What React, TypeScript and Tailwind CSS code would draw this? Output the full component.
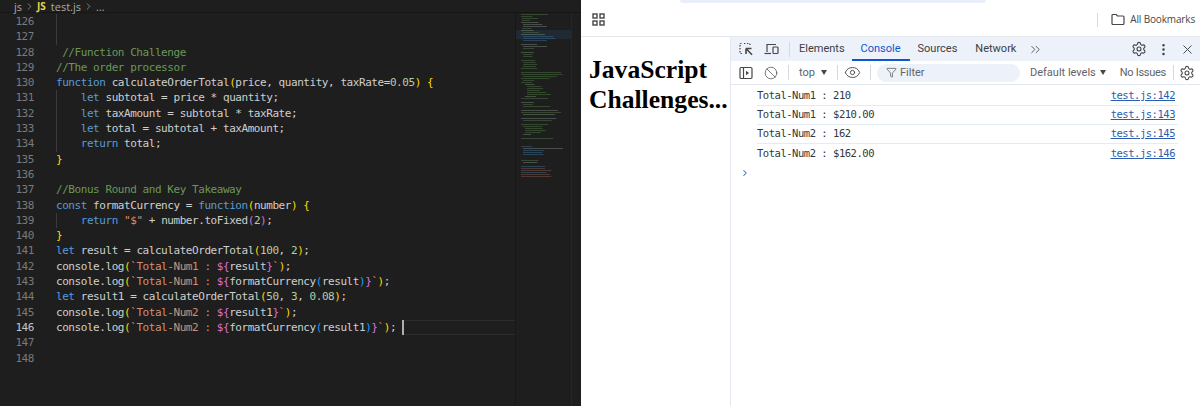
import React from "react";
import { Settings, MoreVertical, X, ChevronsRight, Eye, Ban, Filter, ChevronRight } from "lucide-react";

const C: Record<string, string> = {
  k: "text-[#569cd6]",
  t: "text-[#cfcfcf]",
  c: "text-[#6a9955]",
  s: "text-[#ce9178]",
  n: "text-[#b5cea8]",
  y: "text-[#ffd700]",
  p: "text-[#da70d6]",
  b: "text-[#179fff]",
};

type Tok = [string, string];
const code: { n: number; g?: boolean; toks: Tok[] }[] = [
  { n: 126, g: true, toks: [] },
  { n: 127, g: true, toks: [] },
  { n: 128, toks: [[" //Function Challenge", "c"]] },
  { n: 129, toks: [["//The order processor", "c"]] },
  { n: 130, toks: [["function", "k"], [" calculateOrderTotal", "t"], ["(", "y"], ["price, quantity, taxRate", "t"], ["=", "t"], ["0.05", "n"], [")", "y"], [" ", "t"], ["{", "y"]] },
  { n: 131, g: true, toks: [["    ", "t"], ["let", "k"], [" subtotal = price * quantity;", "t"]] },
  { n: 132, g: true, toks: [["    ", "t"], ["let", "k"], [" taxAmount = subtotal * taxRate;", "t"]] },
  { n: 133, g: true, toks: [["    ", "t"], ["let", "k"], [" total = subtotal + taxAmount;", "t"]] },
  { n: 134, g: true, toks: [["    ", "t"], ["return", "k"], [" total;", "t"]] },
  { n: 135, toks: [["}", "y"]] },
  { n: 136, toks: [] },
  { n: 137, toks: [["//Bonus Round and Key Takeaway", "c"]] },
  { n: 138, toks: [["const", "k"], [" formatCurrency = ", "t"], ["function", "k"], ["(", "y"], ["number", "t"], [")", "y"], [" ", "t"], ["{", "y"]] },
  { n: 139, g: true, toks: [["    ", "t"], ["return", "k"], [" ", "t"], ['"$"', "s"], [" + number.toFixed", "t"], ["(", "p"], ["2", "n"], [")", "p"], [";", "t"]] },
  { n: 140, toks: [["}", "y"]] },
  { n: 141, toks: [["let", "k"], [" result = calculateOrderTotal", "t"], ["(", "y"], ["100", "n"], [", ", "t"], ["2", "n"], [")", "y"], [";", "t"]] },
  { n: 142, toks: [["console.log", "t"], ["(", "y"], ["`Total-Num1 : ", "s"], ["${", "p"], ["result", "t"], ["}", "p"], ["`", "s"], [")", "y"], [";", "t"]] },
  { n: 143, toks: [["console.log", "t"], ["(", "y"], ["`Total-Num1 : ", "s"], ["${", "p"], ["formatCurrency", "t"], ["(", "b"], ["result", "t"], [")", "b"], ["}", "p"], ["`", "s"], [")", "y"], [";", "t"]] },
  { n: 144, toks: [["let", "k"], [" result1 = calculateOrderTotal", "t"], ["(", "y"], ["50", "n"], [", ", "t"], ["3", "n"], [", ", "t"], ["0.08", "n"], [")", "y"], [";", "t"]] },
  { n: 145, toks: [["console.log", "t"], ["(", "y"], ["`Total-Num2 : ", "s"], ["${", "p"], ["result1", "t"], ["}", "p"], ["`", "s"], [")", "y"], [";", "t"]] },
  { n: 146, toks: [["console.log", "t"], ["(", "y"], ["`Total-Num2 : ", "s"], ["${", "p"], ["formatCurrency", "t"], ["(", "b"], ["result1", "t"], [")", "b"], ["}", "p"], ["`", "s"], [")", "y"], [";", "t"]] },
  { n: 147, toks: [] },
  { n: 148, toks: [] },
];

// minimap rows: indent, width, colour
const G = "#4f7a45", W = "#7d8a80", B = "#3f6f9c", R = "#8a5a48";
const mini: [number, number, string][] = [
  [0, 34, G], [0, 14, G], [1, 20, G], [1, 10, G], [0, 22, W], [2, 24, W], [2, 30, W], [1, 12, G], [0, 16, W], [2, 20, G], [0, 30, W], [2, 38, B], [2, 40, B], [2, 30, B], [0, 0, W], [0, 20, W], [2, 30, W], [2, 14, G], [0, 0, W],
  [0, 16, W], [2, 12, G], [2, 12, G], [0, 0, W], [0, 18, G], [2, 16, G], [2, 18, G], [2, 16, G], [0, 20, G], [0, 0, W], [0, 50, G], [0, 52, G], [2, 42, G], [0, 36, G], [2, 14, G], [0, 14, G], [4, 12, W], [6, 18, G], [6, 20, G], [6, 16, G], [6, 24, G], [6, 30, G], [4, 14, W], [0, 34, G], [0, 0, W],
  [0, 16, W], [2, 12, G], [2, 34, G], [0, 0, W], [0, 46, W], [0, 50, G], [2, 40, W], [0, 0, W], [0, 44, W], [2, 36, G], [0, 0, W], [0, 34, G], [2, 24, G], [4, 22, G], [4, 26, G], [4, 20, G], [2, 10, W], [0, 0, W], [0, 40, G], [0, 0, W], [0, 0, W], [0, 0, W], [0, 14, B], [2, 50, W], [2, 26, B], [2, 24, B], [2, 26, B], [0, 0, W], [0, 0, W], [0, 22, G], [2, 18, W], [0, 0, W], [0, 30, B], [0, 30, R], [0, 38, R], [0, 32, B], [0, 36, R], [0, 38, R],
];

function Minimap() {
  return (
    <svg width="55" height="180" viewBox="0 0 55 180" className="block">
      <rect x="0" y="17" width="55" height="9" fill="#1f2a33" />
      {mini.map((m, i) =>
        m[1] ? <rect key={i} x={5 + m[0]} y={1 + i * 2} width={m[1] * 0.8} height="1" fill={m[2]} opacity="0.45" /> : null
      )}
    </svg>
  );
}

function Inspect() {
  return (
    <svg width="14" height="14" viewBox="0 0 14 14" fill="none" stroke="#474747" strokeWidth="1.2">
      <path d="M1 4.5V2.5a1 1 0 0 1 1-1h1.5M5 1.5h1.5M8 1.5h2a1 1 0 0 1 1 1V4M1 6v1.5M1 9v1.5a1 1 0 0 0 1 1h2" strokeDasharray="1.4 1.1" />
      <path d="M7 6.5h5.5M7 6.5v5.5M7.2 6.7L13 12.7" strokeWidth="1.6" />
    </svg>
  );
}
function Device() {
  return (
    <svg width="15" height="14" viewBox="0 0 15 14" fill="none" stroke="#474747" strokeWidth="1.2">
      <path d="M3 10V2.5h9" />
      <path d="M0.5 11.5h6.5" />
      <rect x="9" y="5" width="5" height="6.5" rx="0.8" />
    </svg>
  );
}
function SidebarIcon() {
  return (
    <svg width="14" height="14" viewBox="0 0 14 14" fill="none" stroke="#474747" strokeWidth="1.2">
      <rect x="1" y="1.5" width="12" height="11" rx="1.2" />
      <path d="M4.5 1.5v11" />
      <path d="M7 4.7l3 2.3-3 2.3z" fill="#474747" stroke="none" />
    </svg>
  );
}
function Apps() {
  return (
    <svg width="13" height="13" viewBox="0 0 13 13" fill="none" stroke="#474747" strokeWidth="1.4">
      <rect x="1" y="1" width="4" height="4" />
      <rect x="8" y="1" width="4" height="4" />
      <rect x="1" y="8" width="4" height="4" />
      <rect x="8" y="8" width="4" height="4" />
    </svg>
  );
}
function Folder() {
  return (
    <svg width="14" height="13" viewBox="0 0 14 13" fill="none" stroke="#474747" strokeWidth="1.2">
      <path d="M1 2.5a1 1 0 0 1 1-1h3.2l1.3 1.5H12a1 1 0 0 1 1 1v6.5a1 1 0 0 1-1 1H2a1 1 0 0 1-1-1z" />
    </svg>
  );
}
function Tri() {
  return <span className="inline-block w-0 h-0 border-x-[3.5px] border-x-transparent border-t-[5px] border-t-[#474747]" />;
}
function Sep() {
  return <span className="block w-px h-[15px] bg-[#d5dae2] shrink-0" />;
}

const logs = [
  ["Total-Num1 : 210", "test.js:142"],
  ["Total-Num1 : $210.00", "test.js:143"],
  ["Total-Num2 : 162", "test.js:145"],
  ["Total-Num2 : $162.00", "test.js:146"],
];

export default function App() {
  return (
    <div className="flex h-[406px] w-[1200px] overflow-hidden bg-white font-['Roboto',sans-serif] whitespace-nowrap">
      {/* Editor */}
      <div className="w-[581px] shrink-0 bg-[#1e1e1e] flex flex-col">
        <div className="h-[13px] shrink-0 flex items-center pl-[14px] gap-[2px] text-[11px] leading-[13px] text-[#a9a9a9] bg-[#1e1e1e] border-b border-[#161616] font-['Open_Sans',sans-serif]">
          <span>js</span>
          <ChevronRight size={11} strokeWidth={1.5} />
          <span className="font-bold text-[10px] text-[#e8d44d] mr-[3px]">JS</span>
          <span>test.js</span>
          <ChevronRight size={11} strokeWidth={1.5} />
          <span>...</span>
        </div>
        <div className="flex flex-1 min-h-0">
          <div className="w-[515px] shrink-0 pt-[1px] font-['DejaVu_Sans_Mono',monospace] text-[11px] tracking-[-0.44px] leading-[15.3px] whitespace-pre">
            {code.map((l) => (
              <div key={l.n} className="relative flex h-[15.3px]">
                <span className={`w-[34px] text-right shrink-0 ${l.n === 146 ? "text-[#c6c6c6]" : "text-[#7a7a7a]"}`}>{l.n}</span>
                <span className="w-[22px] shrink-0" />
                {l.g && <span className="absolute left-[56px] top-0 bottom-0 w-px bg-[#3a3a3a]" />}
                <span>
                  {l.toks.map((t, i) => (
                    <span key={i} className={C[t[1]]}>{t[0]}</span>
                  ))}
                </span>
                {l.n === 146 && (
                  <>
                    <span className="ml-[6px] w-[1.5px] h-[15px] bg-[#aeafad] shrink-0" />
                    <span className="flex-1 border-y border-[#2b2b2b]" />
                  </>
                )}
              </div>
            ))}
          </div>
          <div className="w-[56px] shrink-0 border-l border-[#171717]">
            <Minimap />
          </div>
          <div className="flex-1 border-l border-[#262626]" />
        </div>
      </div>

      {/* Browser */}
      <div className="flex-1 min-w-0 flex flex-col">
        <div className="h-[37px] shrink-0 border-b border-[#e3e6ea] flex flex-col">
          <div className="h-[3px] ml-[99px] w-[306px] bg-[#e9eff9] rounded-b-[3px]" />
          <div className="flex-1 flex items-center pl-[11px] pr-[5px]">
            <Apps />
            <div className="flex-1" />
            <span className="w-px h-[14px] bg-[#d5dae2]" />
            <span className="ml-[13px] mr-[5px] flex"><Folder /></span>
            <span className="text-[10px] tracking-[-0.15px] text-[#474747] font-['Open_Sans',sans-serif]">All Bookmarks</span>
          </div>
        </div>
        <div className="flex flex-1 min-h-0">
          <div className="w-[150px] shrink-0 px-[8px] pt-[18px] border-r border-[#e3e8f0]">
            <h1 className="font-['Liberation_Serif',serif] font-bold text-[25.6px] leading-[30px] text-black">
              JavaScript
              <br />
              Challenges...
            </h1>
          </div>
          <div className="flex-1 min-w-0 flex flex-col">
            <div className="h-[24px] shrink-0 bg-[#edf2fa] flex items-center pl-[8px] pr-[5px] text-[11px] text-[#3c4043]">
              <Inspect />
              <span className="ml-[11px] flex"><Device /></span>
              <span className="ml-[10px]"><Sep /></span>
              <span className="ml-[9px] mt-[1px]">Elements</span>
              <span className="relative ml-[16px] h-full flex items-center text-[#0b57d0]">
                <span className="mt-[1px]">Console</span>
                <span className="absolute -left-[9px] -right-[9px] bottom-0 h-[2px] bg-[#0b57d0]" />
              </span>
              <span className="ml-[17px] mt-[1px]">Sources</span>
              <span className="ml-[18px] mt-[1px]">Network</span>
              <ChevronsRight size={15} strokeWidth={1.3} className="ml-[12px]" />
              <div className="flex-1" />
              <Settings size={16} strokeWidth={1.6} />
              <MoreVertical size={15} strokeWidth={2} className="ml-[9px]" />
              <X size={15} strokeWidth={1.5} className="ml-[9px]" />
            </div>
            <div className="h-[24px] shrink-0 border-b border-[#e3e8f0] flex items-center pl-[8px] pr-[5px] text-[11px] text-[#5f6368]">
              <SidebarIcon />
              <Ban size={14} strokeWidth={1.2} className="ml-[11px] text-[#474747]" />
              <span className="ml-[10px]"><Sep /></span>
              <span className="ml-[10px] mt-[1px]">top</span>
              <span className="ml-[6px] flex"><Tri /></span>
              <span className="ml-[10px]"><Sep /></span>
              <Eye size={17} strokeWidth={1.3} className="ml-[6px] text-[#474747]" />
              <span className="ml-[9px]"><Sep /></span>
              <div className="ml-[6px] w-[143px] h-[18px] rounded-full bg-[#edf2fa] flex items-center pl-[9px] gap-[3px]">
                <Filter size={11} strokeWidth={1.5} className="text-[#474747]" />
                <span className="mt-[1px]">Filter</span>
              </div>
              <span className="ml-[10px] mt-[1px]">Default levels</span>
              <span className="ml-[4px] flex"><Tri /></span>
              <span className="ml-[14px] mt-[1px] tracking-[-0.3px]">No Issues</span>
              <span className="ml-[7px]"><Sep /></span>
              <div className="flex-1" />
              <Settings size={16} strokeWidth={1.6} className="text-[#474747]" />
            </div>
            <div className="pl-[26px] pr-[22px] pt-[2px] font-['DejaVu_Sans_Mono',monospace] text-[10.5px] tracking-[-0.47px] text-[#303942]">
              {logs.map((l, i) => (
                <div key={i} className={`h-[19px] flex items-center justify-between ${i < 3 ? "border-b border-[#e3ebf7]" : ""}`}>
                  <span>{l[0]}</span>
                  <span className="underline text-[#2a5db0] mr-[3px]">{l[1]}</span>
                </div>
              ))}
            </div>
            <div className="pl-[9px] mt-[5px] flex">
              <ChevronRight size={10} strokeWidth={2.5} className="text-[#2a6fc9]" />
            </div>
          </div>
        </div>
      </div>
    </div>
  );
}
